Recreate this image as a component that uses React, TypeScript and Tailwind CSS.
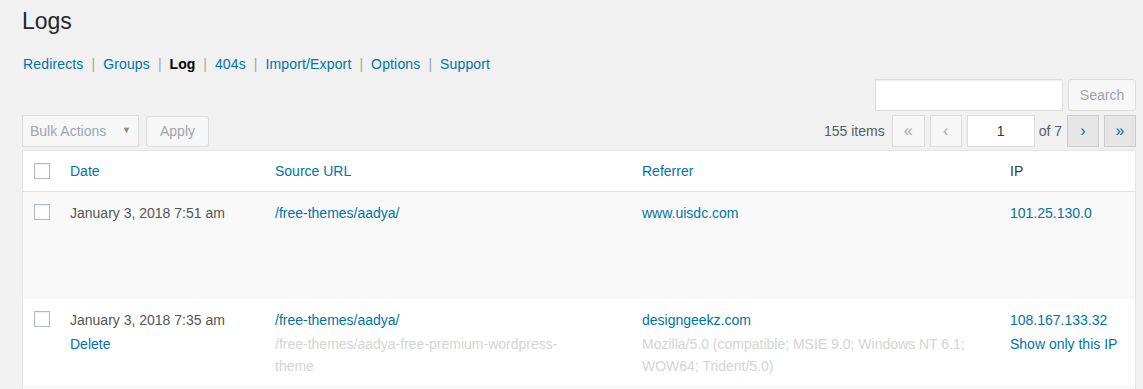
import { ReactNode } from 'react';

const navItems = ['Redirects', 'Groups', 'Log', '404s', 'Import/Export', 'Options', 'Support'];

function Checkbox() {
  return <div className="w-4 h-4 border border-[#b4b9be] bg-white shadow-[inset_0_1px_2px_rgba(0,0,0,0.07)]" />;
}

function PageButton({ children, active, className }: { children: ReactNode; active?: boolean; className?: string }) {
  return (
    <div
      className={`h-[32px] flex items-center justify-center border text-[16px] ${
        active ? 'bg-[#e5e5e5] border-[#cccccc] text-[#0073aa]' : 'bg-[#f7f7f7] border-[#dddddd] text-[#a0a5aa]'
      } ${className ?? ''}`}
    >
      {children}
    </div>
  );
}

function Row({ striped, height, cells }: { striped?: boolean; height: string; cells: ReactNode[] }) {
  return (
    <div className={`grid grid-cols-[38px_205px_367px_368px_1fr] ${height} ${striped ? 'bg-[#f9f9f9]' : 'bg-white'}`}>
      <div className="pl-[11px] pt-[12px]">
        <Checkbox />
      </div>
      {cells.map((c, i) => (
        <div key={i} className="pl-[9px] pt-[10px] leading-[22px]">
          {c}
        </div>
      ))}
    </div>
  );
}

export default function App() {
  return (
    <div className="min-h-screen bg-[#f1f1f1] pl-[22px] pr-[7px] text-[14px] text-[#444]" style={{ fontFamily: '"Liberation Sans", Arial, sans-serif' }}>
      <h1 className="pt-[7px] text-[23px] leading-[29px] text-[#23282d]">Logs</h1>

      <div className="mt-[18px] flex items-center leading-[20px] pl-[1px]">
        {navItems.map((item, index) => (
          <div key={item} className="flex items-center">
            {index > 0 && <span className="mx-[8px] text-[#a0a5aa]">|</span>}
            <span className={item === 'Log' ? 'font-bold text-black' : 'text-[#0073aa] tracking-[0.15px]'}>{item}</span>
          </div>
        ))}
      </div>

      <div className="mt-[5px] flex justify-end gap-[5px]">
        <div className="w-[188px] h-[32px] bg-white border border-[#dddddd] shadow-[inset_0_1px_2px_rgba(0,0,0,0.07)]" />
        <div className="w-[68px] h-[32px] flex items-center justify-center bg-[#f7f7f7] border border-[#dddddd] rounded-[3px] text-[#a0a5aa]">
          Search
        </div>
      </div>

      <div className="mt-[4px] flex items-center justify-between">
        <div className="flex items-center gap-[7px]">
          <div className="w-[117px] h-[32px] flex items-center justify-between pl-[7px] pr-[7px] bg-[#f7f7f7] border border-[#dddddd] text-[#a0a5aa]">
            <span>Bulk Actions</span>
            <span className="text-[9px] text-[#888]">▼</span>
          </div>
          <div className="w-[63px] h-[31px] flex items-center justify-center bg-[#f7f7f7] border border-[#dddddd] rounded-[3px] text-[#a0a5aa]">
            Apply
          </div>
        </div>
        <div className="flex items-center">
          <span className="mr-[7px] text-[#555d66]">155 items</span>
          <PageButton className="w-[33px]">«</PageButton>
          <PageButton className="w-[32px] ml-[5px]">‹</PageButton>
          <div className="ml-[5px] w-[68px] h-[32px] flex items-center justify-center bg-white border border-[#dddddd] text-[#32373c]">1</div>
          <span className="ml-[4px] text-[#555d66]">of 7</span>
          <PageButton active className="w-[32px] ml-[5px]">›</PageButton>
          <PageButton active className="w-[32px] ml-[5px]">»</PageButton>
        </div>
      </div>

      <div className="mt-[3px] border border-[#e5e5e5] border-b-0 bg-white">
        <div className="grid grid-cols-[38px_205px_367px_368px_1fr] h-[41px] border-b border-[#e1e1e1] items-center">
          <div className="pl-[11px]">
            <Checkbox />
          </div>
          <div className="pl-[9px] text-[#0073aa]">Date</div>
          <div className="pl-[9px] text-[#0073aa]">Source URL</div>
          <div className="pl-[9px] text-[#0073aa]">Referrer</div>
          <div className="pl-[9px] text-[#32373c]">IP</div>
        </div>

        <Row
          striped
          height="h-[107px]"
          cells={[
            <span className="text-[#555]">January 3, 2018 7:51 am</span>,
            <span className="text-[#0073aa]">/free-themes/aadya/</span>,
            <span className="text-[#0073aa]">www.uisdc.com</span>,
            <span className="text-[#0073aa]">101.25.130.0</span>,
          ]}
        />

        <Row
          height="h-[86px]"
          cells={[
            <>
              <div className="text-[#555]">January 3, 2018 7:35 am</div>
              <div className="mt-[2px] text-[#0073aa]">Delete</div>
            </>,
            <>
              <div className="text-[#0073aa]">/free-themes/aadya/</div>
              <div className="mt-[2px] text-[#d4d4d4] pr-[40px]">/free-themes/aadya-free-premium-wordpress-theme</div>
            </>,
            <>
              <div className="text-[#0073aa]">designgeekz.com</div>
              <div className="mt-[2px] text-[#d4d4d4] pr-[20px]">Mozilla/5.0 (compatible; MSIE 9.0; Windows NT 6.1; WOW64; Trident/5.0)</div>
            </>,
            <>
              <div className="text-[#0073aa]">108.167.133.32</div>
              <div className="mt-[2px] text-[#0073aa]">Show only this IP</div>
            </>,
          ]}
        />

        <div className="h-[20px] bg-[#f9f9f9]" />
      </div>
    </div>
  );
}
